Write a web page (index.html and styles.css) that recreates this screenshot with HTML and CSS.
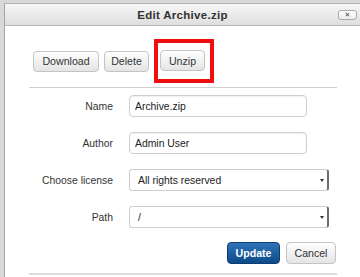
FILE: index.html
```html
<!DOCTYPE html>
<html lang="en">
<head>
    <meta charset="UTF-8">
    <meta name="viewport" content="width=device-width, initial-scale=1.0">
    <title>Edit Archive.zip</title>
    <link rel="stylesheet" href="styles.css">
</head>
<body>
    <div class="dialog">
        <div class="dialog-header">
            <span></span>
            <h2 class="dialog-title">Edit Archive.zip</h2>
            <button class="close-btn" type="button">&#x2715;</button>
        </div>

        <div class="dialog-body">
            <div class="file-actions">
                <button class="btn btn-download" type="button">Download</button>
                <button class="btn btn-small" type="button">Delete</button>
                <span class="highlight">
                    <button class="btn btn-small" type="button">Unzip</button>
                </span>
            </div>

            <form class="file-form">
                <label class="form-label" for="name">Name</label>
                <input class="text-input" type="text" id="name" value="Archive.zip">

                <label class="form-label" for="author">Author</label>
                <input class="text-input" type="text" id="author" value="Admin User">

                <label class="form-label">Choose license</label>
                <div class="select-box">
                    <span class="select-value">All rights reserved</span>
                    <span class="select-arrow"></span>
                </div>

                <label class="form-label">Path</label>
                <div class="select-box">
                    <span class="select-value">/</span>
                    <span class="select-arrow"></span>
                </div>

                <div class="form-actions">
                    <button class="btn btn-primary" type="button">Update</button>
                    <button class="btn btn-cancel" type="button">Cancel</button>
                </div>
            </form>

            <div class="bottom-rule"></div>
        </div>
    </div>
</body>
</html>
```

FILE: styles.css
```css
html, body {
    height: 100%;
}
body {
    font-family: "Liberation Sans", Arial, sans-serif;
    margin: 0;
    padding: 3px 0 0 4px;
    box-sizing: border-box;
    background-color: #d9d9d9; /* page behind the dialog */
    color: #333;
    overflow: hidden;
}
.dialog {
    height: 100%;
    background-color: #fff;
    border-top: 1px solid #b3b3b3;
    border-left: 1px solid #a5a5a5;
}
.dialog-header {
    display: grid;
    grid-template-columns: 1fr auto 1fr;
    align-items: center;
    height: 21px;
    background: linear-gradient(#f7f7f7, #dedede);
    border-bottom: 1px solid #b9b9b9;
}
.dialog-title {
    margin: 0;
    font-size: 11.5px;
    font-weight: bold;
    letter-spacing: 0.3px;
    color: #333;
}
.close-btn {
    justify-self: end;
    width: 19px;
    height: 10px;
    margin-right: 3px;
    padding: 0;
    border: 1px solid #a9a9a9;
    border-radius: 3px;
    background: linear-gradient(#fff, #ededed);
    font-family: "DejaVu Sans", sans-serif;
    font-size: 7px;
    font-weight: bold;
    line-height: 8px;
    color: #444;
}
.dialog-body {
    padding: 13px 23px 0 24px;
}
.file-actions {
    display: flex;
    align-items: center;
    gap: 5px;
    padding-left: 4px;
    padding-bottom: 4px;
    border-bottom: 1px solid #d0d0d0;
}
.btn {
    height: 21px;
    padding: 0;
    border: 1px solid #c4c4c4;
    border-radius: 4px;
    background: linear-gradient(#ffffff, #e4e4e4);
    font-family: "Liberation Sans", Arial, sans-serif;
    font-size: 10.6px;
    color: #333;
}
.btn-download {
    width: 66px;
}
.btn-small {
    width: 45px;
}
.highlight {
    display: flex;
    margin-left: 0;
    padding: 7px 5px 8px 2px;
    border: 4px solid #f00d0d; /* rode markering */
}
.file-form {
    display: grid;
    grid-template-columns: 84px 1fr;
    column-gap: 16px;
    row-gap: 15px;
    align-items: center;
    padding-top: 7px;
}
.form-label {
    text-align: right;
    font-size: 10.4px;
    color: #333;
}
.text-input {
    width: 178px;
    height: 22px;
    box-sizing: border-box;
    padding: 0 5px;
    border: 1px solid #cfcfcf;
    border-radius: 4px;
    box-shadow: inset 0 1px 1px rgba(0, 0, 0, 0.06);
    font-family: "Liberation Sans", Arial, sans-serif;
    font-size: 10.4px;
    color: #222;
}
.select-box {
    display: flex;
    align-items: center;
    width: 200px;
    height: 22px;
    box-sizing: border-box;
    padding-left: 8px;
    border: 1px solid #cfcfcf;
    border-right: 2px solid #6d6d6d;
    border-radius: 3px;
    font-size: 10.4px;
    color: #222;
}
.select-value {
    flex: 1;
}
.select-arrow {
    width: 0;
    height: 0;
    margin-right: 3px;
    border-left: 2px solid transparent;
    border-right: 2px solid transparent;
    border-top: 3px solid #333;
}
.form-actions {
    grid-column: 1 / -1;
    display: flex;
    justify-content: flex-end;
    gap: 6px;
    margin-top: -1px;
    margin-right: 1px;
}
.form-actions .btn {
    height: 22px;
}
.btn-cancel {
    width: 50px;
}
.btn-primary {
    width: 53px;
    border-color: #0c3e72;
    background: linear-gradient(#2f74b8, #0d4a8a);
    color: #fff;
    font-weight: bold;
}
.bottom-rule {
    margin-top: 9px;
    border-top: 2px solid #dcdcdc;
}
```
